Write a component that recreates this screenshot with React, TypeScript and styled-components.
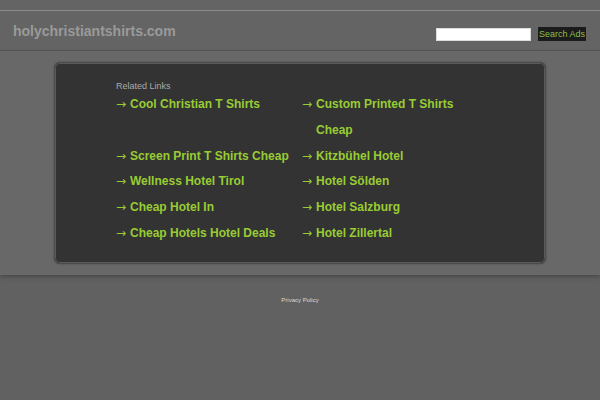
import styled, { createGlobalStyle } from 'styled-components'

const Global = createGlobalStyle`
  body {
    margin: 0;
    background: #616161;
    font-family: "Liberation Sans", Arial, sans-serif;
  }
`

const Page = styled.div`
  display: flex;
  flex-direction: column;
`

const TopStrip = styled.div`
  height: 10px;
  background: #646464;
  border-bottom: 1px solid #8c8c8c;
`

const Header = styled.header`
  display: flex;
  align-items: center;
  justify-content: space-between;
  height: 39px;
  padding: 0 14px 0 13px;
  background: #646464;
  border-bottom: 1px solid #575757;
`

const Domain = styled.div`
  font-size: 14px;
  font-weight: bold;
  color: #9a9a9a;
`

const SearchForm = styled.form`
  display: flex;
  align-items: center;
  gap: 7px;
  margin-top: 7px;
`

const SearchInput = styled.input`
  width: 93px;
  height: 11px;
  padding: 0;
  border: 1px solid #dcdcdc;
  background: #fff;
  outline: none;
`

const SearchButton = styled.button`
  height: 14px;
  padding: 0 1px;
  border: 0;
  background: #1b1b1b;
  color: #8fbf4a;
  font-family: "Liberation Sans", Arial, sans-serif;
  font-size: 9px;
  line-height: 14px;
`

const Content = styled.main`
  display: flex;
  justify-content: center;
  padding: 11px 0;
  background: #686868;
  box-shadow: 0 2px 4px rgba(0, 0, 0, 0.25);
`

const Panel = styled.section`
  box-sizing: border-box;
  width: 492px;
  height: 202px;
  background: #333;
  border: 1px solid #4a4a4a;
  border-radius: 6px;
  box-shadow: inset 0 0 0 1px #5a5a5a, 0 0 2px rgba(0, 0, 0, 0.3);
  padding: 0 0 0 61px;
`

const Heading = styled.div`
  margin-top: 18px;
  font-size: 9px;
  color: #a8a8a8;
  line-height: 11px;
  height: 11px;
`

const LinkGrid = styled.div`
  display: grid;
  grid-template-columns: 186px 170px;
`

const LinkItem = styled.a`
  display: flex;
  gap: 3px;
  font-size: 12px;
  font-weight: bold;
  color: #9c3;
  line-height: 25.8px;
  text-decoration: none;
`

const Arrow = styled.span`
  flex: none;
  width: 11px;
  font-family: "DejaVu Sans", sans-serif;
  font-weight: normal;
  font-size: 12px;
`

const Footer = styled.footer`
  display: flex;
  justify-content: center;
  padding-top: 22px;
`

const Privacy = styled.a`
  font-size: 6px;
  color: #d8d8d8;
  text-decoration: underline;
`

const links = [
  'Cool Christian T Shirts',
  'Custom Printed T Shirts Cheap',
  'Screen Print T Shirts Cheap',
  'Kitzbühel Hotel',
  'Wellness Hotel Tirol',
  'Hotel Sölden',
  'Cheap Hotel In',
  'Hotel Salzburg',
  'Cheap Hotels Hotel Deals',
  'Hotel Zillertal',
]

const App = () => (
  <Page>
    <Global />
    <TopStrip />
    <Header>
      <Domain>holychristiantshirts.com</Domain>
      <SearchForm onSubmit={e => e.preventDefault()}>
        <SearchInput type="text" />
        <SearchButton type="submit">Search Ads</SearchButton>
      </SearchForm>
    </Header>
    <Content>
      <Panel>
        <Heading>Related Links</Heading>
        <LinkGrid>
          {links.map(l => (
            <LinkItem key={l} href="#">
              <Arrow>→</Arrow>
              <span>{l}</span>
            </LinkItem>
          ))}
        </LinkGrid>
      </Panel>
    </Content>
    <Footer>
      <Privacy href="#">Privacy Policy</Privacy>
    </Footer>
  </Page>
)

export default App
